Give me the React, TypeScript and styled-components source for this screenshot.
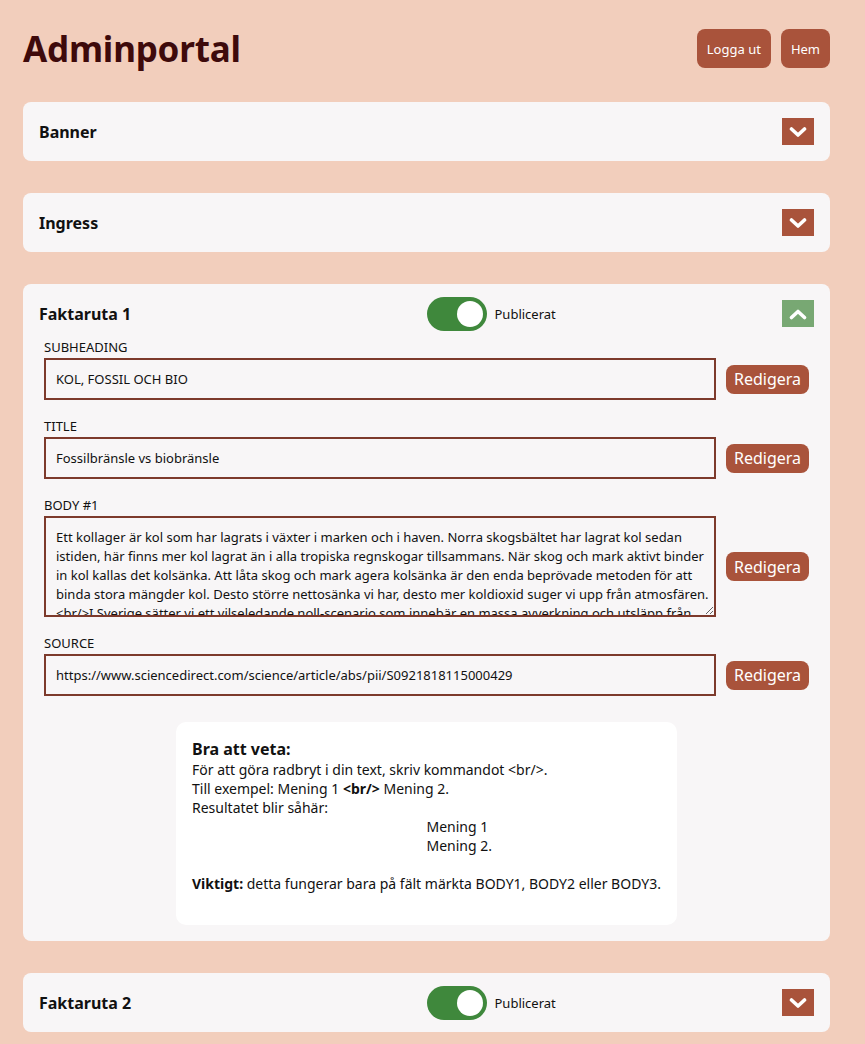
import React, { useState } from "react";
import styled, { createGlobalStyle } from "styled-components";

const GlobalStyle = createGlobalStyle`
  * { box-sizing: border-box; }
  body {
    margin: 0;
    background: #f2cebc;
    font-family: "Noto Sans", "Open Sans", sans-serif;
    color: #111;
  }
`;

const BODY_TEXT =
  "Ett kollager är kol som har lagrats i växter i marken och i haven. Norra skogsbältet har lagrat kol sedan istiden, här finns mer kol lagrat än i alla tropiska regnskogar tillsammans. När skog och mark aktivt binder in kol kallas det kolsänka. Att låta skog och mark agera kolsänka är den enda beprövade metoden för att binda stora mängder kol. Desto större nettosänka vi har, desto mer koldioxid suger vi upp från atmosfären. <br/>I Sverige sätter vi ett vilseledande noll-scenario som innebär en massa avverkning och utsläpp från skogsbruket som inte räknas in i den svenska klimatpolitiken.";

const Chevron: React.FC<{ up?: boolean }> = ({ up }) => (
  <svg width="18" height="12" viewBox="0 0 18 12">
    <path
      d={up ? "M2.5 9.5 L9 3.5 L15.5 9.5" : "M2.5 3 L9 9 L15.5 3"}
      fill="none"
      stroke="#fff"
      strokeWidth="3.6"
      strokeLinecap="round"
      strokeLinejoin="round"
    />
  </svg>
);

const Section: React.FC<{
  title: string;
  toggle?: boolean;
  open?: boolean;
  children?: React.ReactNode;
}> = ({ title, toggle, open, children }) => {
  const [published, setPublished] = useState(true);
  return (
    <Card>
      <CardHeader>
        <CardTitle>{title}</CardTitle>
        <HeaderRight>
          {toggle ? (
            <ToggleGroup>
              <Switch on={published} onClick={() => setPublished(!published)}>
                <Knob on={published} />
              </Switch>
              <ToggleLabel>Publicerat</ToggleLabel>
            </ToggleGroup>
          ) : (
            <span />
          )}
          <ChevronButton open={open}>
            <Chevron up={open} />
          </ChevronButton>
        </HeaderRight>
      </CardHeader>
      {open && <CardBody>{children}</CardBody>}
    </Card>
  );
};

const Field: React.FC<{ label: string; value: string; multiline?: boolean }> = ({
  label,
  value,
  multiline,
}) => (
  <FieldGroup>
    <FieldLabel>{label}</FieldLabel>
    <FieldRow>
      {multiline ? (
        <TextArea defaultValue={value} />
      ) : (
        <TextInput defaultValue={value} />
      )}
      <EditButton>Redigera</EditButton>
    </FieldRow>
  </FieldGroup>
);

const App: React.FC = () => (
  <>
    <GlobalStyle />
    <Page>
      <TopBar>
        <PageTitle>Adminportal</PageTitle>
        <TopActions>
          <TopButton>Logga ut</TopButton>
          <TopButton>Hem</TopButton>
        </TopActions>
      </TopBar>
      <Sections>
        <Section title="Banner" />
        <Section title="Ingress" />
        <Section title="Faktaruta 1" toggle open>
          <Field label="SUBHEADING" value="KOL, FOSSIL OCH BIO" />
          <Field label="TITLE" value="Fossilbränsle vs biobränsle" />
          <Field label="BODY #1" value={BODY_TEXT} multiline />
          <Field
            label="SOURCE"
            value="https://www.sciencedirect.com/science/article/abs/pii/S0921818115000429"
          />
          <InfoBox>
            <InfoTitle>Bra att veta:</InfoTitle>
            <InfoLine>För att göra radbryt i din text, skriv kommandot &lt;br/&gt;.</InfoLine>
            <InfoLine>
              Till exempel: Mening 1 <b>&lt;br/&gt;</b> Mening 2.
            </InfoLine>
            <InfoLine>Resultatet blir såhär:</InfoLine>
            <InfoLine indent>Mening 1</InfoLine>
            <InfoLine indent>Mening 2.</InfoLine>
            <InfoSpacer />
            <InfoLine>
              <b>Viktigt:</b> detta fungerar bara på fält märkta BODY1, BODY2 eller BODY3.
            </InfoLine>
          </InfoBox>
        </Section>
        <Section title="Faktaruta 2" toggle />
      </Sections>
    </Page>
  </>
);

const Page = styled.div`
  padding: 29px 35px 40px 23px;
`;

const TopBar = styled.header`
  display: flex;
  align-items: center;
  justify-content: space-between;
  height: 39px;
  margin-bottom: 34px;
`;

const PageTitle = styled.h1`
  margin: 0;
  font-size: 35px;
  font-weight: 700;
  color: #3e0a0b;
  letter-spacing: -0.2px;
`;

const TopActions = styled.div`
  display: flex;
  gap: 10px;
`;

const TopButton = styled.button`
  height: 39px;
  padding: 0 10px;
  border: none;
  border-radius: 8px;
  background: #a9533b;
  color: #fff;
  font-family: inherit;
  font-size: 13px;
`;

const Sections = styled.div`
  display: flex;
  flex-direction: column;
  gap: 32px;
`;

const Card = styled.section`
  background: #f8f6f7;
  border-radius: 8px;
  padding: 16px;
`;

const CardHeader = styled.div`
  display: grid;
  grid-template-columns: 1fr 1fr;
  grid-template-rows: 27px;
  align-items: center;
`;

const CardTitle = styled.h2`
  margin: 0;
  font-size: 16px;
  font-weight: 700;
`;

const HeaderRight = styled.div`
  display: flex;
  align-items: center;
  justify-content: space-between;
  height: 27px;
`;

const ToggleGroup = styled.div`
  display: flex;
  align-items: center;
  gap: 8px;
`;

const Switch = styled.button<{ on: boolean }>`
  position: relative;
  flex-shrink: 0;
  width: 60px;
  height: 34px;
  border: none;
  border-radius: 17px;
  padding: 0;
  background: ${({ on }) => (on ? "#3f883c" : "#bbb")};
  cursor: pointer;
`;

const Knob = styled.span<{ on: boolean }>`
  position: absolute;
  top: 4px;
  left: ${({ on }) => (on ? "30px" : "4px")};
  width: 26px;
  height: 26px;
  border-radius: 50%;
  background: #fff;
`;

const ToggleLabel = styled.span`
  font-size: 13px;
`;

const ChevronButton = styled.button<{ open?: boolean }>`
  display: flex;
  align-items: center;
  justify-content: center;
  width: 32px;
  height: 27px;
  padding: 0;
  border: none;
  background: ${({ open }) => (open ? "#78a873" : "#a9533b")};
`;

const CardBody = styled.div`
  display: flex;
  flex-direction: column;
  gap: 17px;
  padding: 11px 5px 0;
`;

const FieldGroup = styled.div`
  display: flex;
  flex-direction: column;
  gap: 2px;
`;

const FieldLabel = styled.label`
  font-size: 13px;
  line-height: 18px;
`;

const FieldRow = styled.div`
  display: flex;
  align-items: center;
  gap: 10px;
`;

const TextInput = styled.input`
  flex: 1;
  height: 42px;
  padding: 0 10px;
  border: 2px solid #7d3a2c;
  background: transparent;
  font-family: inherit;
  font-size: 13px;
  color: #111;
  outline: none;
`;

const TextArea = styled.textarea`
  flex: 1;
  height: 101px;
  padding: 10px 2px 0 10px;
  border: 2px solid #7d3a2c;
  background: transparent;
  font-family: inherit;
  font-size: 13px;
  line-height: 19px;
  color: #111;
  outline: none;
  overflow-y: scroll;
  &::-webkit-scrollbar {
    width: 8px;
  }
  &::-webkit-scrollbar-track {
    background: transparent;
    margin: 12px 0;
  }
  &::-webkit-scrollbar-thumb {
    background: #8f8f8f;
    border-left: 3px solid #f8f6f7;
    border-right: 3px solid #f8f6f7;
  }
`;

const EditButton = styled.button`
  flex-shrink: 0;
  width: 83px;
  height: 29px;
  padding: 0;
  border: none;
  border-radius: 8px;
  background: #a9533b;
  color: #fff;
  font-family: inherit;
  font-size: 16px;
`;

const InfoBox = styled.div`
  align-self: center;
  width: 501px;
  margin-top: 9px;
  padding: 16px 16px 32px;
  background: #fff;
  border-radius: 10px;
  font-size: 14px;
  line-height: 19px;
`;

const InfoTitle = styled.h3`
  margin: 0;
  font-size: 16px;
  line-height: 22px;
  font-weight: 700;
`;

const InfoLine = styled.div<{ indent?: boolean }>`
  padding-left: ${({ indent }) => (indent ? "50%" : "0")};
`;

const InfoSpacer = styled.div`
  height: 19px;
`;

export default App;
